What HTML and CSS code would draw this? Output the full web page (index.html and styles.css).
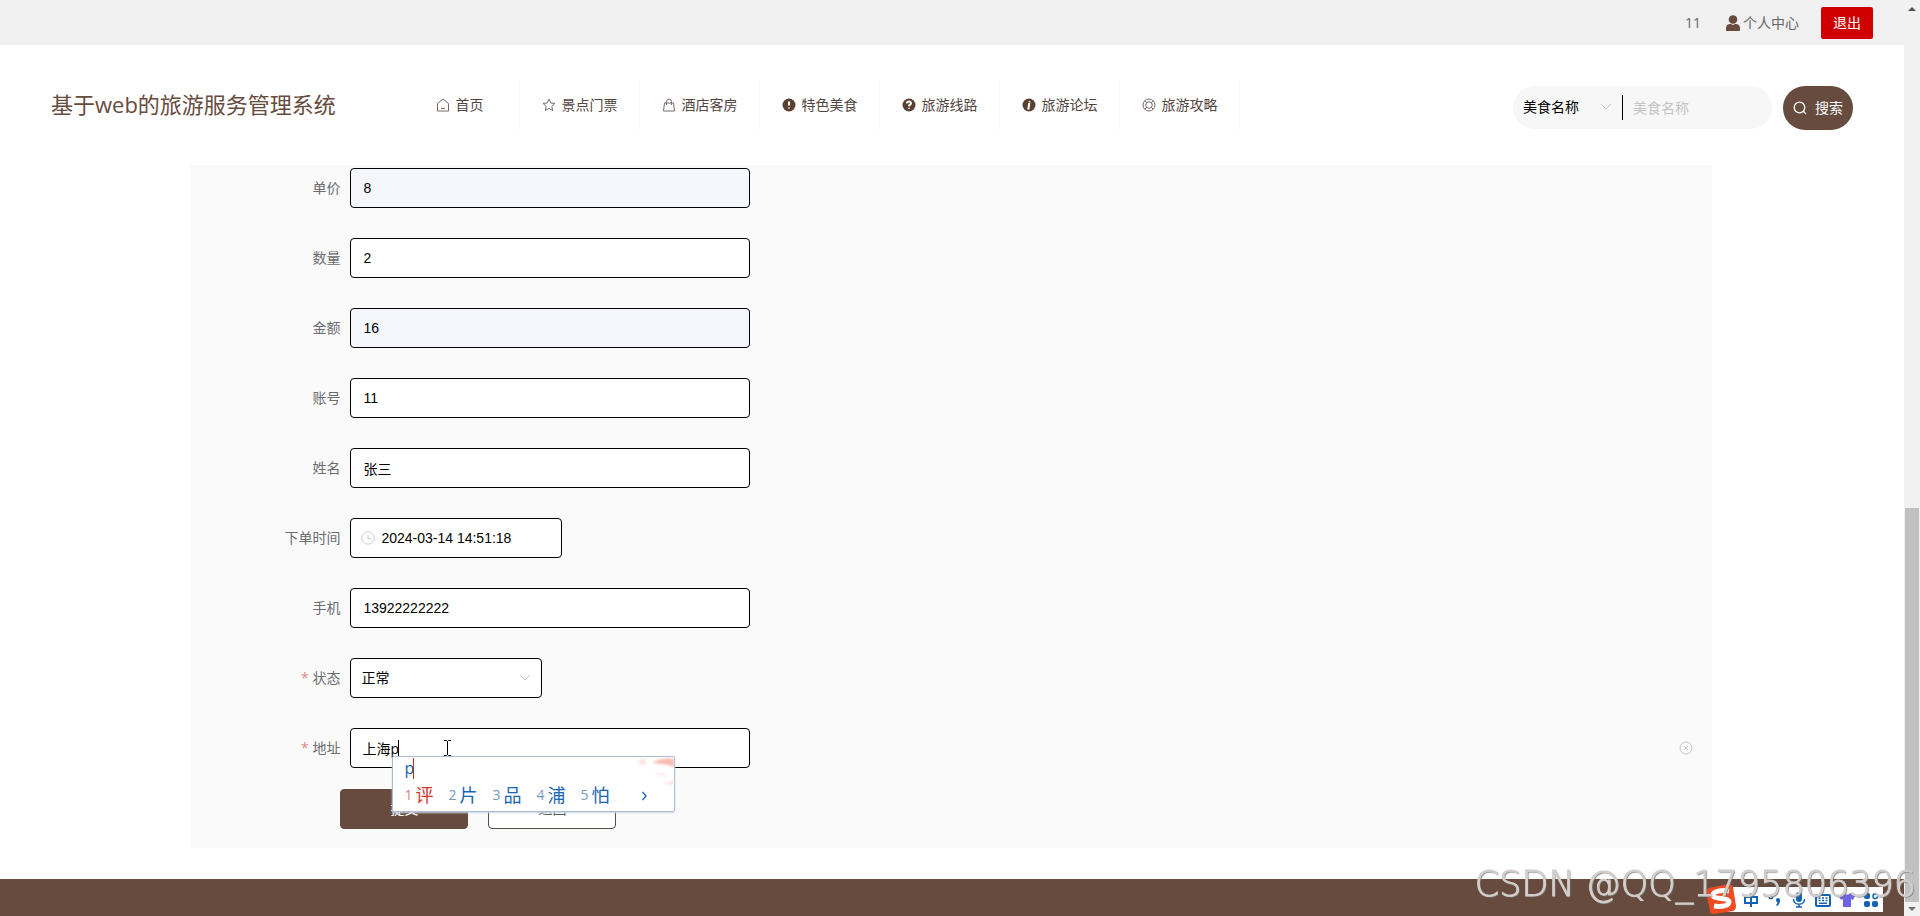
FILE: index.html
```html
<!DOCTYPE html>
<html lang="zh-CN">
<head>
<meta charset="utf-8">
<title>基于web的旅游服务管理系统</title>
<link rel="stylesheet" href="styles.css">
</head>
<body>
<div class="window">
  <div class="page">
    <div class="topbar">
      <span class="user-name">11</span>
      <a class="user-link" href="#">
        <svg class="person" viewBox="0 0 14 16"><circle cx="7" cy="4.500" r="4.300"/><path d="M0 15v-2c0-2.500 2-4 4-4h1l2 1 2-1h1c2 0 4 1.500 4 4v2c0 .6-.4 1-1 1H1c-.6 0-1-.4-1-1z"/></svg>个人中心
      </a>
      <button class="logout" type="button">退出</button>
    </div>
    <header class="header">
      <h1 class="title">基于web的旅游服务管理系统</h1>
      <nav class="nav">
        <a class="nav-item" href="#"><svg class="icon line" viewBox="0 0 14 14"><path d="M1.500 13V5.500L7 1l5.500 4.500V13zM5 10.500h4"/></svg>首页</a>
        <a class="nav-item" href="#"><svg class="icon line" viewBox="0 0 14 14"><path d="M7 1l1.800 4 4.200.4-3.200 2.900.9 4.200L7 10.400l-3.700 2.100.9-4.200L1 5.400 5.200 5z"/></svg>景点门票</a>
        <a class="nav-item" href="#"><svg class="icon line" viewBox="0 0 14 14"><path d="M2.500 5h9l1 8h-11zM4.500 7V3.500a2.500 2.500 0 0 1 5 0V7"/></svg>酒店客房</a>
        <a class="nav-item" href="#"><svg class="icon" viewBox="0 0 14 14"><circle class="disc" cx="7" cy="7" r="6.500"/><path class="mark" d="M7 3.500v4M7 9.500v1"/></svg>特色美食</a>
        <a class="nav-item" href="#"><svg class="icon" viewBox="0 0 14 14"><circle class="disc" cx="7" cy="7" r="6.500"/><path class="mark" d="M5 5.500C5 3 9 3 9 5.300 9 6.700 7 6.500 7 8.200M7 9.700v1"/></svg>旅游线路</a>
        <a class="nav-item" href="#"><svg class="icon" viewBox="0 0 14 14"><circle class="disc" cx="7" cy="7" r="6.500"/><path class="mark" d="M7.700 3.200l-.2 1M6 6h1.200l-.8 4.500h1.200"/></svg>旅游论坛</a>
        <a class="nav-item" href="#"><svg class="icon line" viewBox="0 0 14 14"><circle cx="7" cy="7" r="6"/><circle cx="7" cy="7" r="3.300"/><path d="M2.800 2.800l2 2M11.200 2.800l-2 2M2.800 11.200l2-2M11.200 11.200l-2-2"/></svg>旅游攻略</a>
      </nav>
      <form class="search">
        <div class="search-box">
          <select class="search-type" aria-label="搜索类型"><option>美食名称</option></select>
          <svg class="chevron" viewBox="0 0 12 8"><path d="M1 1l5 5 5-5"/></svg>
          <input class="search-text" type="text" aria-label="美食名称" placeholder="美食名称">
        </div>
        <button class="search-button" type="button"><svg class="lens" viewBox="0 0 14 14"><circle cx="6.500" cy="6.500" r="5.300"/><path d="M10.300 10.300L13 13"/></svg>搜索</button>
      </form>
    </header>
    <main class="main">
      <form class="panel">
        <div class="row"><label class="label" for="price">单价</label><input class="field readonly" id="price" type="text" value="8" readonly></div>
        <div class="row"><label class="label" for="count">数量</label><input class="field" id="count" type="text" value="2"></div>
        <div class="row"><label class="label" for="total">金额</label><input class="field readonly" id="total" type="text" value="16" readonly></div>
        <div class="row"><label class="label" for="account">账号</label><input class="field" id="account" type="text" value="11"></div>
        <div class="row"><label class="label" for="name">姓名</label><input class="field" id="name" type="text" value="张三"></div>
        <div class="row"><label class="label" for="time">下单时间</label>
          <div class="field date"><svg class="clock" viewBox="0 0 14 14"><circle cx="7" cy="7" r="6.200"/><path d="M7 3.500V7.500h3"/></svg><input class="date-text" id="time" type="text" value="2024-03-14 14:51:18"></div></div>
        <div class="row"><label class="label" for="phone">手机</label><input class="field" id="phone" type="text" value="13922222222"></div>
        <div class="row"><label class="label required" for="status">状态</label>
          <div class="field status"><select class="status-select" id="status"><option>正常</option></select><svg class="chevron" viewBox="0 0 12 8"><path d="M1 1l5 5 5-5"/></svg></div></div>
        <div class="row address"><label class="label required" for="address">地址</label>
          <div class="address-box">
            <input class="field" id="address" type="text" value="上海p">
            <span class="caret"></span>
            <svg class="ibeam" viewBox="0 0 7 16"><path d="M0 .5h2.500l1 1 1-1H7M0 15.500h2.500l1-1 1 1H7M3.500 1v14"/></svg>
            <div class="ime">
              <div class="ime-input">p</div>
              <svg class="ime-swirl" viewBox="0 0 36 30"><path class="swirl-dark" d="M14 6C20 2 30 0 36 2v8c-8-3-14-3-22-4z"/><path class="swirl-light" d="M2 8c-3-4 1-7 7-7C6 3 6 5 10 7zM16 16c6 0 12 0 14 3-4 1-10-1-14-3zM24 26c4 0 8-1 12-4v5c-4 1-8 1-12-1z"/></svg>
              <div class="ime-list">
                <span class="word first"><i class="num">1</i>评</span><span class="word"><i class="num">2</i>片</span><span class="word"><i class="num">3</i>品</span><span class="word"><i class="num">4</i>浦</span><span class="word"><i class="num">5</i>怕</span>
                <svg class="ime-next" viewBox="0 0 5 10"><path d="M.5 1l3.500 4L.5 9"/></svg>
              </div>
            </div>
          </div>
          <svg class="clear" viewBox="0 0 14 14"><circle cx="7" cy="7" r="6"/><path d="M5 5l4 4M9 5L5 9"/></svg>
        </div>
        <div class="actions"><button class="button primary" type="button">提交</button><button class="button" type="button">返回</button></div>
      </form>
    </main>
    <footer class="footer"></footer>
  </div>
  <div class="scrollbar"><span class="arrow-up"></span><span class="thumb"></span><span class="arrow-down"></span></div>
</div>
<div class="tray">
  <svg class="sogou" viewBox="0 0 30 30"><path class="tile" d="M3 4l20-4c2 0 3 1 4 3l3 19c0 3-1 4-3 5L8 30c-3 0-4-1-4-3L0 8c0-2 1-3 3-4z"/><path class="curve" d="M23 7c-7-1-16 0-16 4 0 5 16 2 16 7 0 4-8 5-15 4"/></svg>
  <svg class="tool" viewBox="0 0 16 16"><path class="stroke" d="M2 5h12v6H2zM8 1v14"/></svg>
  <svg class="tool" viewBox="0 0 16 16"><circle class="thin" cx="4" cy="5" r="1.700"/><path d="M9 8a2 2 0 1 1 4 0c0 3-1 5-3 6l-1-1c1-1 1.500-2 1.500-3-1 0-1.500-1-1.500-2z"/></svg>
  <svg class="tool" viewBox="0 0 16 16"><rect x="5" y="0" width="6" height="10" rx="3"/><path class="thin" d="M2.500 7c0 7 11 7 11 0M8 12v3M5 15h6"/></svg>
  <svg class="tool" viewBox="0 0 16 16"><rect class="stroke" x="1" y="3" width="14" height="11" rx="1"/><path class="dots" d="M3.500 6h9M3.500 8.500h9"/><path class="thin" d="M4 11.300h8"/></svg>
  <svg class="tool shirt" viewBox="0 0 16 16"><path d="M5 1c1 2 5 2 6 0l5 3-2 4-2-1v8H4V7L2 8 0 4z"/></svg>
  <svg class="tool" viewBox="0 0 16 16"><rect x="1" y="1" width="6" height="6" rx="2"/><rect class="thin" x="10" y="2" width="4.500" height="4.500" rx="2"/><rect x="1" y="9" width="6" height="6" rx="2"/><rect x="9" y="9" width="6" height="6" rx="2"/></svg>
</div>
<div class="watermark">CSDN @QQ_1795806396</div>
</body>
</html>
```
FILE: styles.css
```css
* { box-sizing: border-box; }
body { margin: 0; background: #fff; color: #666; font: 14px/20px "Open Sans", "Noto Sans CJK SC", sans-serif; }
button, input, select { font: inherit; margin: 0; }
a { color: inherit; text-decoration: none; }
svg { fill: none; flex: none; }

.window { display: flex; min-height: 100vh; overflow: hidden; }
.page { flex: 1; display: flex; flex-direction: column; min-width: 0; }

.topbar { display: flex; align-items: center; justify-content: flex-end; height: 45px; padding-right: 31px; background: #f0f0f0; }
.user-name { margin-right: 25px; }
.user-link { display: flex; align-items: center; gap: 3px; margin-right: 22px; }
.person { width: 14px; height: 16px; fill: #664b3e; }
.logout { width: 52px; height: 32px; padding: 0; border: 0; border-radius: 2px; background: #d00000; color: #fff; }

.header { display: flex; align-items: center; height: 120px; padding: 0 51px; }
.title { width: 349px; margin: 0 0 2px; font-size: 22px; line-height: 30px; font-weight: 400; color: #664b3e; }
.nav { display: flex; flex: 1; }
.nav-item { display: flex; align-items: center; justify-content: center; gap: 6px; width: 120px; height: 50px; border-right: 1px solid #f7f7f7; color: #51453f; }
.icon { width: 14px; height: 14px; }
.line { stroke: #756b66; }
.disc { fill: #5a4030; }
.mark { stroke: #fff; stroke-width: 2; }
.search { display: flex; gap: 11px; margin-top: 5px; }
.search-box { display: flex; align-items: center; width: 259px; height: 43px; padding-left: 10px; border-radius: 22px; background: #f7f7f7; }
.search-type { width: 77px; padding: 0; border: 0; appearance: none; background: none; color: #000; }
.chevron { width: 12px; height: 8px; stroke: #c5c8ce; }
.search-text { width: 130px; height: 25px; margin-left: 10px; padding: 0 10px; border: 0; border-left: 1px solid #000; background: none; outline: 0; }
.search-text::placeholder { color: #c4c4c4; }
.search-button { display: flex; align-items: center; gap: 8px; height: 44px; padding: 0 10px; border: 0; border-radius: 22px; background: #664b3e; color: #fff; }
.lens { width: 14px; height: 14px; stroke: #fff; stroke-width: 1.300; }

.main { flex: 1; padding: 0 calc(10% + 2px) 0 10%; }
.panel { padding: 3px 0 19px; background: #fafafa; }
.row { display: flex; align-items: center; height: 40px; margin-bottom: 30px; }
.label { width: 150px; margin-right: 10px; text-align: right; color: #6a6c70; }
.required::before { content: "* "; color: #e8868a; }
.field { width: 400px; height: 40px; padding: 0 12px; border: 1px solid #000; border-radius: 4px; background: #fff; color: #000; font-family: "Liberation Sans", "Noto Sans CJK SC", sans-serif; outline: 0; }
.readonly { background: #f5f7fd; }
.date { display: flex; align-items: center; gap: 6px; width: 212px; padding: 0 10px; }
.clock { width: 14px; height: 14px; stroke: #c9ccd2; }
.date-text { width: 160px; padding: 0; border: 0; outline: 0; background: none; }
.status { display: flex; align-items: center; justify-content: space-between; width: 192px; padding: 0 10px; }
.status-select { flex: 1; padding: 0; border: 0; appearance: none; background: none; color: #000; }
.address { margin-bottom: 21px; }
.address-box { position: relative; margin-right: auto; }
.address-box .field { padding: 0 11px; font-family: "Open Sans", "Noto Sans CJK SC", sans-serif; }
.caret { position: absolute; left: 48px; top: 12px; width: 1px; height: 16px; background: #000; }
.ibeam { position: absolute; left: 94px; top: 12px; width: 7px; height: 16px; stroke: #000; }
.clear { width: 14px; height: 14px; margin-right: 19px; stroke: #c3c3c3; }

.ime { position: absolute; left: 42px; top: 28px; z-index: 2; width: 283px; height: 56px; padding: 1px 11px; border: 1px solid #a9bfd9; border-radius: 2px; background: #fff; box-shadow: 0 1px 2px #ccd5e0; color: #1765b5; }
.ime-input { width: 10px; height: 21px; border-right: 1px solid #d02a20; font-size: 16px; line-height: 20px; }
.ime-list { display: flex; align-items: center; gap: 15px; height: 32px; font-size: 18px; line-height: 28px; }
.word { display: flex; align-items: center; gap: 2px; }
.num { width: 9px; font-size: 14px; font-style: normal; color: #7398bd; }
.first { color: #d93226; }
.first .num { color: #e07f85; }
.ime-next { width: 5px; height: 10px; margin: 2px 0 0 18px; stroke: #1765b5; stroke-width: 1.300; }
.ime-swirl { position: absolute; right: 0; top: 0; width: 36px; height: 30px; filter: blur(1px); }
.swirl-dark { fill: #f7bfb4; }
.swirl-light { fill: #fce6e2; }

.actions { display: flex; gap: 20px; padding-left: 150px; }
.button { width: 128px; height: 40px; padding: 0; border: 1px solid #554b47; border-radius: 4px; background: #fff; color: #555; }
.primary { border-color: #664b3e; background: #664b3e; color: #fff; }
.footer { height: 37px; background: #664b3e; }

.scrollbar { display: flex; flex-direction: column; align-items: center; width: 16px; background: #f1f1f1; }
.arrow-up { margin-top: 7px; border: 4px solid transparent; border-top: 0; border-bottom-color: #505050; }
.thumb { width: 14px; height: 43vh; margin-top: auto; background: #c1c1c1; }
.arrow-down { margin: 5px 0; border: 4px solid transparent; border-bottom: 0; border-top-color: #707070; }

.tray { position: fixed; right: 37px; bottom: 4px; display: flex; align-items: center; gap: 8px; height: 25px; padding-right: 4px; background: #fff; }
.sogou { width: 30px; height: 30px; margin: 0 -1px 2px -8px; }
.tile { fill: #ee4b22; }
.curve { stroke: #fff; stroke-width: 5; }
.tool { width: 16px; height: 16px; fill: #1262b5; }
.stroke { fill: none; stroke: #1262b5; stroke-width: 2; }
.thin { fill: none; stroke: #1262b5; stroke-width: 1.500; }
.dots { stroke: #1262b5; stroke-width: 1.500; stroke-dasharray: 2 1.500; }
.shirt { fill: #6d65e2; }
.watermark { position: fixed; right: 4px; bottom: 12px; z-index: 3; color: #d7d2d0; font: 200 35px/40px "DejaVu Sans", sans-serif; -webkit-text-stroke: 1px #d0cbc9; text-shadow: 1px 1px 1px #777; white-space: nowrap; }
```
